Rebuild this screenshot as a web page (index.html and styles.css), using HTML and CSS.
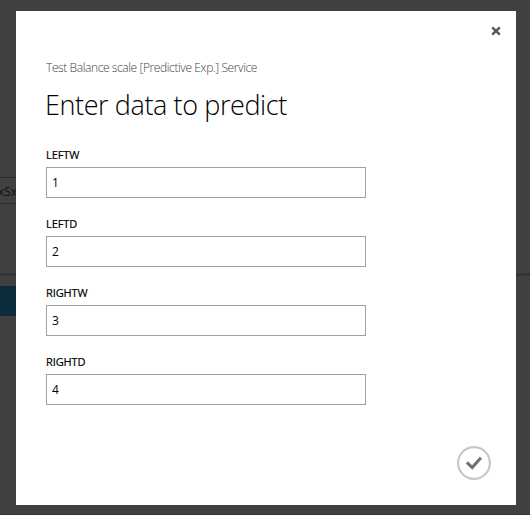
FILE: index.html
```
<!DOCTYPE html>
<html lang="en">
<head>
  <meta charset="UTF-8" />
  <meta name="viewport" content="width=device-width, initial-scale=1" />
  <title>Enter data to predict</title>
  <link rel="stylesheet" href="styles.css">
</head>
<body>

<!-- dimmed page behind the dialog -->
<div class="page">
  <div class="api-key"><span>xSx</span></div>
  <div class="divider"></div>
  <div class="row-selected"></div>
</div>

<div class="dialog">
  <button type="button" class="close" aria-label="Close">
    <svg width="10" height="10" viewBox="0 0 10 10">
      <path d="M1.2 1.4 L8.8 8.6 M8.8 1.4 L1.2 8.6" />
    </svg>
  </button>

  <p class="subtitle">Test Balance scale [Predictive Exp.] Service</p>
  <h1>Enter data to predict</h1>

  <form id="predictForm">
    <div class="field">
      <label for="leftw">LEFTW</label>
      <input type="text" id="leftw" value="1" />
    </div>
    <div class="field">
      <label for="leftd">LEFTD</label>
      <input type="text" id="leftd" value="2" />
    </div>
    <div class="field">
      <label for="rightw">RIGHTW</label>
      <input type="text" id="rightw" value="3" />
    </div>
    <div class="field">
      <label for="rightd">RIGHTD</label>
      <input type="text" id="rightd" value="4" />
    </div>
  </form>

  <button type="submit" form="predictForm" class="submit" aria-label="OK">
    <svg width="34" height="34" viewBox="0 0 34 34">
      <circle cx="17" cy="17" r="15.9" />
      <path d="M9.9 16.4 L15.2 21.6 L23.9 11.7" />
    </svg>
  </button>
</div>

</body>
</html>
```

FILE: styles.css
```
body {
  margin: 0;
  height: 515px;
  overflow: hidden;
  position: relative;
  background-color: #404040;
  font-family: "Open Sans", "Noto Sans", sans-serif;
  color: #000;
}

/* page under the overlay */
.page {
  box-sizing: border-box;
  height: 515px;
  padding-top: 177px;
  border-bottom: 1px solid #383535;
}

.api-key {
  box-sizing: border-box;
  width: 200px;
  height: 27px;
  border: 1px solid #2b2b2b;
  border-left: none;
  font-size: 12px;
  line-height: 27px;
  color: #141414;
}

.api-key span {
  margin-left: -2px;
}

.divider {
  height: 3px;
  margin-top: 69px;
  background-color: #333;
}

.row-selected {
  width: 200px;
  height: 30px;
  margin-top: 10px;
  background-color: #0a2c3b;
}

/* dialog */
.dialog {
  position: absolute;
  top: 11px;
  left: 16px;
  box-sizing: border-box;
  width: 500px;
  height: 494px;
  padding: 48px 30px 0;
  background-color: #fff;
}

.subtitle {
  margin: 0;
  font-size: 12px;
  font-weight: 300;
  line-height: 18px;
  letter-spacing: -0.4px;
  color: #444;
}

h1 {
  margin: 9px 0 0 -1px;
  font-size: 27px;
  font-weight: 300;
  line-height: 38px;
  letter-spacing: -0.4px;
}

form {
  margin-top: 23px;
}

.field {
  height: 69px;
}

label {
  display: block;
  height: 20px;
  font-size: 11px;
  line-height: 15px;
  letter-spacing: -0.1px;
  -webkit-text-stroke: 0.2px #000;
}

input[type="text"] {
  display: block;
  box-sizing: border-box;
  width: 320px;
  height: 31px;
  padding: 0 5px;
  border: 1px solid #a0a0a0;
  border-radius: 0;
  background-color: #fff;
  font-family: inherit;
  font-size: 12px;
  color: #000;
  outline: none;
}

button {
  padding: 0;
  border: none;
  background: none;
  cursor: pointer;
}

button svg {
  display: block;
  fill: none;
}

.close {
  position: absolute;
  top: 15px;
  right: 15px;
}

.close path {
  stroke: #555;
  stroke-width: 2.4;
}

.submit {
  position: absolute;
  right: 25px;
  bottom: 25px;
}

.submit circle {
  stroke: #c8c8c8;
  stroke-width: 2.2;
}

.submit path {
  stroke: #707070;
  stroke-width: 3;
}
```
